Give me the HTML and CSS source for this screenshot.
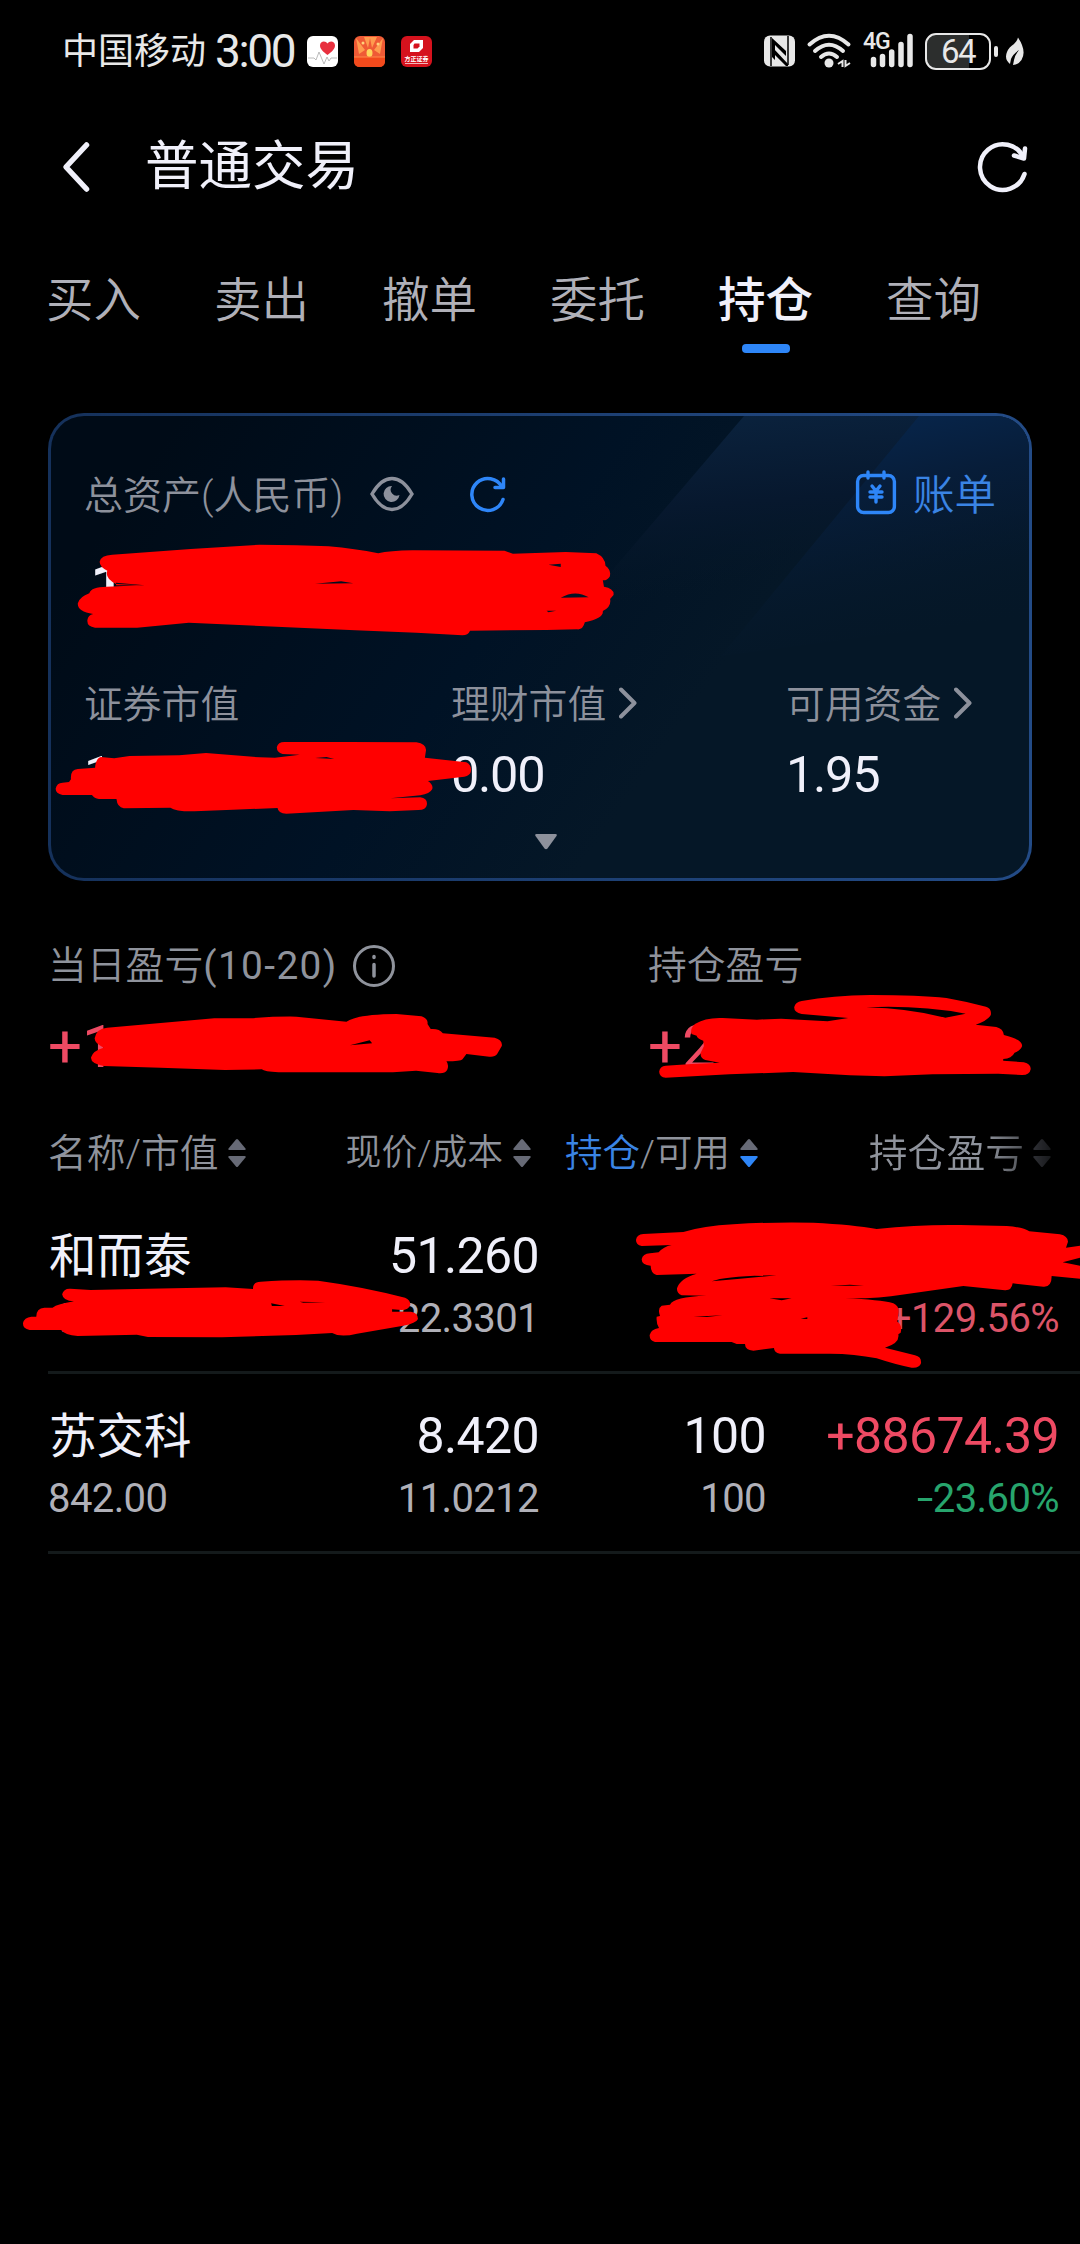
FILE: index.html
```html
<!DOCTYPE html>
<html lang="zh-CN">
<head>
<meta charset="utf-8">
<title>普通交易</title>
<link rel="stylesheet" href="styles.css">
</head>
<body>
<svg width="0" height="0" class="defs">
  <symbol id="sort" viewBox="0 0 18 28"><path class="up" d="M8 .6Q9 -.4 10 .6L17.500 9.500Q18.300 11 16.500 11H1.500Q-.3 11 .5 9.500Z"/><path class="down" d="M8 27.400Q9 28.400 10 27.400L17.500 18.500Q18.300 17 16.500 17H1.500Q-.3 17 .5 18.500Z"/></symbol>
  <symbol id="chev" viewBox="0 0 18 32"><path d="M2 2.500L15.500 16L2 29.500" fill="none" stroke="currentColor" stroke-width="4" stroke-linecap="round" stroke-linejoin="round"/></symbol>
</svg>
<div class="screen">
  <div class="status">
    <span class="carrier">中国移动</span><span class="clock">3:00</span>
    <div class="apps">
      <svg width="31" height="31" viewBox="0 0 31 31"><rect width="31" height="31" rx="6" fill="#fff"/><path d="M20.500 19C16 15.500 13 13 13 9.500C13 5 18.500 4 20.500 7.500C22.500 4 28 5 28 9.500C28 13 25 15.500 20.500 19Z" fill="#e8303f"/><path d="M1 22H7L9 24L12 16L17 28L20 21L22 25L24 22H30" fill="none" stroke="#aaa" stroke-width=".8"/></svg>
      <svg width="31" height="31" viewBox="0 0 31 31"><rect width="31" height="31" rx="6" fill="#ef5a35"/><path d="M2 2L11 14L5 18ZM29 2L20 14L26 18ZM10 1L14 12L16 2L18 12L23 1Z" fill="#ff9b4e"/><circle cx="9" cy="7" r="1.500" fill="#ffd27a"/><circle cx="24" cy="8" r="1.500" fill="#ffd27a"/><ellipse cx="15.500" cy="17" rx="3" ry="4" fill="#ffd45c"/><path d="M0 21H31V25Q31 31 25 31H6Q0 31 0 25Z" fill="#f24a1c"/><path d="M0 21H31" stroke="#ff8a4a"/></svg>
      <svg width="31" height="31" viewBox="0 0 31 31"><rect width="31" height="31" rx="6" fill="#d5121d"/><path d="M13 4H22V12L18 16H9V8Z" fill="#fff"/><path d="M13.500 7.500H18.500V10.500L16.500 12.500H12.500V9Z" fill="#d5121d"/><text x="15.500" y="25" class="logo-text" text-anchor="middle">方正证券</text><path d="M4 27.500H27" stroke="#fff" stroke-width=".7"/></svg>
    </div>
    <div class="signals">
      <svg class="nfc" width="31" height="32" viewBox="0 0 31 32"><rect y=".5" width="31" height="31" rx="6" fill="#e8e8e8"/><path d="M7 2V31M24 1V30" stroke="#000" stroke-width="1.500"/><path d="M8 3L22 16V21L11 10V25L8 22ZM10 14L24 29V31H22L10 19Z" fill="#000"/></svg>
      <svg class="wifi" width="45" height="36" viewBox="0 0 45 36" fill="none" stroke="#e8e8e8" stroke-width="4" stroke-linecap="round"><path d="M2.500 11.500Q22 -6 41.500 11.500M8 18Q22 5.500 36 18M14 24Q22 17 30 24"/><circle cx="22" cy="30" r="4.500" fill="#e8e8e8" stroke="none"/><path d="M31 31L35.500 28V34M38.500 27V33L43 30" stroke-width="2" stroke-linecap="butt"/></svg>
      <div class="cell"><span class="net">4G</span><svg width="50" height="36" viewBox="0 0 50 36" stroke="#e8e8e8" stroke-width="5.500" stroke-linecap="round"><path d="M10.500 26.500V31.500M19.500 23.500V31.500M28.700 19V31.500M38 11.500V31.500M47 3.500V31.500"/></svg></div>
      <div class="battery"><span>64</span></div><i class="nub"></i>
      <svg class="leaf" width="18" height="29" viewBox="0 0 18 29"><path d="M12 .5Q21 14 15.500 23Q12 28 7 28L8 23Q9 18 13 13Q7 17 5 22L4 27Q-2 22 1 15Q3 10 8 7Q11 4.500 12 .5Z" fill="#e8e8e8"/></svg>
    </div>
  </div>

  <header class="navbar">
    <svg width="30" height="52" viewBox="0 0 30 52"><path d="M25.500 4L5 26L25.500 48" fill="none" stroke="#f0f0fa" stroke-width="5.500" stroke-linecap="round" stroke-linejoin="round"/></svg>
    <h1>普通交易</h1>
    <svg class="reload" width="50" height="52" viewBox="0 0 50 52" fill="none" stroke="#f0f0fa" stroke-width="4.500" stroke-linecap="round" stroke-linejoin="round"><path d="M46.500 33A22.800 22.800 0 1 1 45.500 16.500"/><path d="M47 7.500L46 17.500L36 14.500"/></svg>
  </header>

  <nav class="tabs">
    <a>买入</a><a>卖出</a><a>撤单</a><a>委托</a><a class="active">持仓</a><a>查询</a>
  </nav>

  <section class="card">
    <svg class="facets" width="978" height="462" viewBox="0 0 978 462">
      <defs>
        <linearGradient id="f1" x1="0" y1="0" x2=".15" y2="1"><stop offset="0" stop-color="#0b2440"/><stop offset=".35" stop-color="#07182e"/><stop offset=".65" stop-color="#051727" stop-opacity="0"/></linearGradient>
        <linearGradient id="f2" x1=".3" y1="0" x2=".6" y2="1"><stop offset="0" stop-color="#07274f"/><stop offset=".35" stop-color="#071d39"/><stop offset="1" stop-color="#051727" stop-opacity="0"/></linearGradient>
      </defs>
      <path d="M693 0H978V300H437Z" fill="url(#f1)"/>
      <path d="M868 0H978V200L670 240Z" fill="url(#f2)"/>
    </svg>
    <div class="card-head">
      <span>总资产(人民币)</span>
      <svg class="eye" width="44" height="36" viewBox="0 0 44 36"><path d="M2 18Q11 2.500 22 2.500T42 18Q33 33.500 22 33.500T2 18Z" fill="none" stroke="#8d919c" stroke-width="3.400"/><path d="M22 10A8 8 0 1 0 29.500 19A6 6 0 0 1 22 10Z" fill="#8d919c"/></svg>
      <svg class="sync" width="36" height="36" viewBox="0 0 36 36" fill="none" stroke="#2e86f8" stroke-width="3.500" stroke-linecap="round" stroke-linejoin="round"><path d="M33 23.500A16 16 0 1 1 32 11"/><path d="M33.500 3V11.500H25"/></svg>
      <a class="bill"><svg width="40" height="46" viewBox="0 0 40 46" fill="none" stroke="#2e86f8" stroke-width="3.400" stroke-linecap="round"><rect x="1.600" y="6.500" width="36.800" height="37" rx="6"/><path d="M12 3V9M28 3V9M16 17L20 22L24 17M14 23H26M14 28H26M20 22V33"/></svg>账单</a>
    </div>
    <div class="total">1</div>
    <div class="assets">
      <div><p>证券市值</p><b>1</b></div>
      <div><p>理财市值<svg width="18" height="32"><use href="#chev"/></svg></p><b>0.00</b></div>
      <div><p>可用资金<svg width="18" height="32"><use href="#chev"/></svg></p><b>1.95</b></div>
    </div>
    <svg class="more" width="22" height="16" viewBox="0 0 22 16"><path d="M1.500 0H20.500Q22.500 0 21.500 2L12.500 14.500Q11 16 9.500 14.500L.5 2Q-.5 0 1.500 0Z" fill="#8d919c"/></svg>
  </section>

  <section class="profit">
    <div><p>当日盈亏<span class="range">(10-20)</span><svg width="42" height="42" viewBox="0 0 42 42"><circle cx="21" cy="21" r="19.500" fill="none" stroke="#8f939c" stroke-width="3"/><path d="M21 19.500V31M21 11.500V12.500" stroke="#8f939c" stroke-width="3.500" stroke-linecap="round"/></svg></p><b>+1</b></div>
    <div><p>持仓盈亏</p><b>+2</b></div>
  </section>

  <section class="holdings">
    <div class="row head">
      <span>名称/市值<svg width="18" height="28"><use href="#sort"/></svg></span>
      <span class="h2">现价/成本<svg width="18" height="28"><use href="#sort"/></svg></span>
      <span class="h3"><em>持仓</em>/可用<svg class="desc" width="18" height="28"><use href="#sort"/></svg></span>
      <span class="h4">持仓盈亏<svg width="18" height="28"><use href="#sort"/></svg></span>
    </div>
    <div class="row item">
      <div><b class="name">和而泰</b><i class="covered">1</i></div>
      <div><b>51.260</b><i>22.3301</i></div>
      <div></div>
      <div class="rise"><b></b><i>+129.56%</i></div>
    </div>
    <div class="row item">
      <div><b class="name">苏交科</b><i>842.00</i></div>
      <div><b>8.420</b><i>11.0212</i></div>
      <div><b>100</b><i>100</i></div>
      <div class="rise"><b>+88674.39</b><i class="fall"><span class="minus">-</span>23.60%</i></div>
    </div>
  </section>

  <svg class="marks" width="1080" height="2244" viewBox="0 0 1080 2244" fill="#f00" fill-rule="evenodd">
    <path transform="translate(30 400) scale(.38265 .33333)" d="M182 485Q185 466 215 464L420 447L600 434Q700 434 780 439Q850 446 910 460Q940 452 1000 451L1240 452L1262 461L1400 456L1480 460Q1503 472 1504 497Q1520 510 1515 530Q1508 542 1497 541L1500 560Q1527 565 1525 585L1516 597Q1520 620 1497 633Q1500 655 1450 667Q1445 690 1430 688L1350 690L1150 692Q1145 706 1130 706L1010 698L850 691L600 678L415 668L280 683L170 683Q148 680 150 660Q152 645 165 642Q123 635 125 610Q130 590 155 580Q160 560 200 560L290 556L225 552Q195 535 202 512Q182 500 182 485ZM1355 494L1387 491V501ZM1387 593Q1425 568 1460 592ZM745 551L813 544L845 550ZM1350 632L1375 632L1355 637ZM225 548L300 556H225Z"/>
    <path transform="translate(30 660) scale(.38265 .33333)" d="M645 262Q648 246 665 246L830 246L1010 247Q1035 252 1035 270L1032 293L1140 307Q1155 315 1152 335Q1150 346 1135 350L1040 363Q1055 375 1051 388Q1045 402 1020 406L942 415L1020 412Q1040 415 1037 435Q1035 450 1015 450L940 454L845 450L670 461Q648 460 647 444L530 449L430 454Q380 455 367 443L245 445Q228 442 226 417L180 417Q168 415 162 405L85 405Q67 400 67 386Q70 368 85 368L102 366L107 358Q105 328 125 327L170 323Q172 295 185 291L220 295L260 288L390 286L460 279L600 292L640 293L705 284L660 282Q645 278 645 262ZM745 294L775 291L795 297Z"/>
    <path transform="translate(0 920) scale(.35714 .33333)" d="M265 355Q270 325 300 323L450 309L600 295L700 295Q770 289 830 290L970 305Q1000 283 1110 282L1180 289Q1200 297 1197 312L1206 327Q1230 325 1240 340L1385 353Q1408 360 1405 378L1392 402Q1385 412 1370 410L1306 402L1295 418Q1290 424 1250 424Q1258 435 1252 450Q1245 462 1225 459L1165 452L1100 457L780 457Q740 455 733 448L630 450L450 443L290 438Q253 430 255 412Q260 392 290 383Q265 370 265 355ZM980 376L1035 361L1042 370Z"/>
    <path transform="translate(540 920) scale(.34439 .33333)" d="M738 262Q742 245 760 243Q850 226 960 225Q1100 225 1180 234Q1240 245 1295 260Q1312 265 1309 285Q1300 302 1265 314L1325 321Q1345 326 1347 345Q1400 358 1400 378Q1395 392 1378 398Q1370 415 1345 417V422L1405 427Q1425 432 1425 447Q1422 465 1400 465L1330 461L1140 463L1000 469L900 466L735 456L550 463L365 473Q347 472 346 455Q348 438 365 437L440 432L522 428L480 420Q466 415 466 400L476 378L474 362Q455 355 455 347L440 342Q435 325 450 312Q480 292 530 294L630 299L700 296L835 304L895 294L760 282Q738 278 738 262ZM947 262Q1100 255 1236 281L1177 293Q1070 265 947 262Z"/>
    <path transform="translate(0 1200) scale(.3699 .33333)" d="M168 283Q172 265 190 266L245 270L400 266L610 262L684 267Q683 245 705 245Q800 238 860 242Q980 260 1095 293Q1110 300 1109 315Q1105 330 1085 330L1060 328V335L1110 335Q1130 338 1130 357Q1125 370 1090 377L965 401Q920 413 898 399L800 405L600 412L400 411L370 404L210 408Q175 405 165 390L80 390Q62 387 62 370Q65 352 85 350L98 350Q98 325 120 323L142 323Q155 312 200 304Q170 303 168 283ZM733 310L770 318L735 318ZM810 305L880 307L820 308Z"/>
    <path transform="translate(560 1200) scale(.33333)" d="M228 120Q230 103 250 102L370 96Q430 78 520 73Q640 65 760 68Q880 74 950 87Q1080 73 1200 75L1340 78Q1390 82 1408 94L1500 103Q1523 108 1524 125L1518 143L1560 137V173L1508 187L1560 197V236L1475 228Q1475 262 1450 260L1358 250Q1355 272 1335 271L1210 258L1025 284Q960 296 855 295Q960 299 1000 310Q1018 318 1016 338L1012 365Q1028 375 1022 398L1015 403Q1020 430 975 443L1065 466Q1085 470 1083 490Q1078 505 1055 503Q1010 495 950 475Q880 460 800 461L660 461Q642 458 642 444L580 452Q555 450 555 432L530 432L515 426L285 426Q268 422 269 405Q272 388 297 384Q288 370 290 350L300 348Q292 325 305 317L330 314Q340 290 440 287L365 286Q350 280 351 265Q360 235 410 221L290 225Q272 220 272 197Q245 196 245 178Q248 162 270 160L296 157Q310 140 335 135L245 138Q228 135 228 120ZM455 244Q500 227 650 226Q550 236 455 244ZM628 295H695L665 301ZM812 257L870 254L912 257ZM722 356L742 352V357ZM400 350L488 346L440 351Z"/>
  </svg>
</div>
</body>
</html>
```
FILE: styles.css
```css
* { box-sizing: border-box; margin: 0; padding: 0; }
body { background: #000; font-family: Roboto, "Noto Sans CJK SC", sans-serif; font-weight: 350; color: #f0f0fa; }
b, i, em, h1 { font-style: normal; font-weight: 400; }
svg { display: block; flex: none; overflow: visible; }
.defs { position: absolute; }
.screen { position: relative; width: 1080px; height: 2244px; overflow: hidden; }

.status { height: 102px; padding: 0 56px 0 62px; display: flex; align-items: center; color: #e8e8e8; white-space: nowrap; }
.carrier { font-size: 36px; font-weight: 400; width: 153px; line-height: 40px; margin-top: 1px; }
.clock { font-size: 46px; font-weight: 400; letter-spacing: -2.4px; width: 92px; line-height: 104px; }
.apps { display: flex; gap: 16px; }
.logo-text { font-size: 6px; fill: #fff; font-weight: 700; }
.signals { margin-left: auto; display: flex; align-items: center; }
.wifi { margin-left: 12px; }
.cell { position: relative; margin-left: 11px; }
.net { position: absolute; left: 0; top: -4px; font-size: 23px; line-height: 26px; font-weight: 500; letter-spacing: -1px; }
.battery { margin-left: 12px; width: 66px; height: 37px; border: 2.500px solid #e8e8e8; border-radius: 11px; background: linear-gradient(90deg, #2c2e2d 68%, #000 68%); text-align: center; font-size: 33px; line-height: 33px; font-weight: 400; letter-spacing: -1.500px; }
.nub { width: 4px; height: 11px; margin-left: 3px; border-radius: 2px; background: #e8e8e8; }
.leaf { margin-left: 8px; }

.navbar { height: 130px; padding: 0 52px 0 61px; display: flex; align-items: center; }
.navbar h1 { margin-left: 54px; font-size: 53.500px; line-height: 130px; }
.reload { margin-left: auto; }

.tabs { height: 121px; padding: 39px 0 0 46px; display: flex; gap: 72px; font-size: 47.500px; line-height: 60px; color: #b0b0b8; }
.tabs a { width: 96px; white-space: nowrap; }
.tabs .active { color: #f0f0fa; font-weight: 500; }
.tabs .active::after { content: ""; display: block; width: 48px; height: 9px; margin: 13px auto 0; border-radius: 4px; background: #2e86f8; }

.card { position: relative; margin: 60px 48px 0; height: 468px; padding: 50px 33px 0; border: 3px solid transparent; border-radius: 36px; background: linear-gradient(125deg, #000b17 10%, #001225 45%, #051727 65%) padding-box, linear-gradient(90deg, #15315b, #234b86) border-box; }
.facets { position: absolute; left: 0; top: 0; border-radius: 33px; overflow: hidden; }
.card-head { position: relative; height: 60px; display: flex; align-items: center; font-size: 39px; line-height: 60px; color: #8d919c; }
.eye { margin: -4px 0 0 27px; }
.sync { margin: -4px 0 0 56px; }
.bill { margin-left: auto; margin-right: 0; display: flex; align-items: center; gap: 17px; font-size: 41.500px; color: #3a84e4; }
.bill svg { margin-top: -8px; }
.total { height: 115px; padding-left: 6px; font-size: 63px; line-height: 121px; font-weight: 500; }
.assets { position: relative; margin-top: 34px; display: grid; grid-template-columns: 367px 335px auto; }
.assets p { display: flex; align-items: center; gap: 14px; font-size: 38.800px; line-height: 60px; color: #8d919c; }
.assets p svg { margin: -5px 0 0 -1px; }
.assets b { display: block; font-size: 50.500px; line-height: 80px; letter-spacing: -1.3px; }
.more { margin: 19px 0 0 451px; position: relative; }

.profit { margin-top: 55px; padding-left: 48px; display: grid; grid-template-columns: 600px auto; }
.profit p { display: flex; align-items: center; font-size: 38.800px; line-height: 60px; color: #8f939c; }
.profit p svg { margin-left: 15px; }
.range { letter-spacing: 1.400px; font-weight: 400; }
.profit b { display: block; font-size: 60px; line-height: 102px; color: #ee4a63; height: 101px; }

.row { padding-left: 48px; display: grid; grid-template-columns: 240px 251px 227px 293px; white-space: nowrap; }
.head { height: 97px; padding-top: 15px; font-size: 38.800px; line-height: 83px; color: #8f939c; }
.head span { display: flex; align-items: center; justify-content: flex-end; gap: 9px; padding-right: 8px; }
.head svg { margin-top: -2px; }
.head span:first-child { justify-content: flex-start; }
.head .h2 { font-size: 35.800px; gap: 10px; }
.head .h3 { font-size: 37.500px; gap: 0; }
.head .h3 svg { margin-left: 10px; }
.head em { color: #3a84e4; font-weight: 350; }
.head .h4 { -webkit-mask-image: linear-gradient(90deg, #000 75%, transparent 104%); mask-image: linear-gradient(90deg, #000 75%, transparent 104%); }
.up, .down { fill: #676a76; }
.desc { --down: #2e86f8; }
.down { fill: var(--down, #676a76); }
.item { position: relative; height: 180px; padding-top: 32px; text-align: right; }
.item::after { content: ""; position: absolute; left: 48px; right: 0; bottom: 0; height: 3px; background: #141a1b; }
.item > div:first-child { text-align: left; }
.item b { display: block; height: 60px; font-size: 50px; line-height: 60px; letter-spacing: -.6px; }
.item .name { font-size: 47.500px; line-height: 62px; letter-spacing: 0; padding-left: 1px; }
.item i { display: block; font-size: 40px; line-height: 65px; font-weight: 400; letter-spacing: -.6px; color: #b0b0b8; }
.item .covered { padding-left: 4px; }
.rise b, .rise i { color: #ee4a63; }
.item .rise i { color: #dc5468; }
.item .rise i.fall { color: #27a56d; }
.minus { display: inline-block; transform: scaleX(1.5); transform-origin: right; }

.marks { position: absolute; left: 0; top: 0; pointer-events: none; }
```
